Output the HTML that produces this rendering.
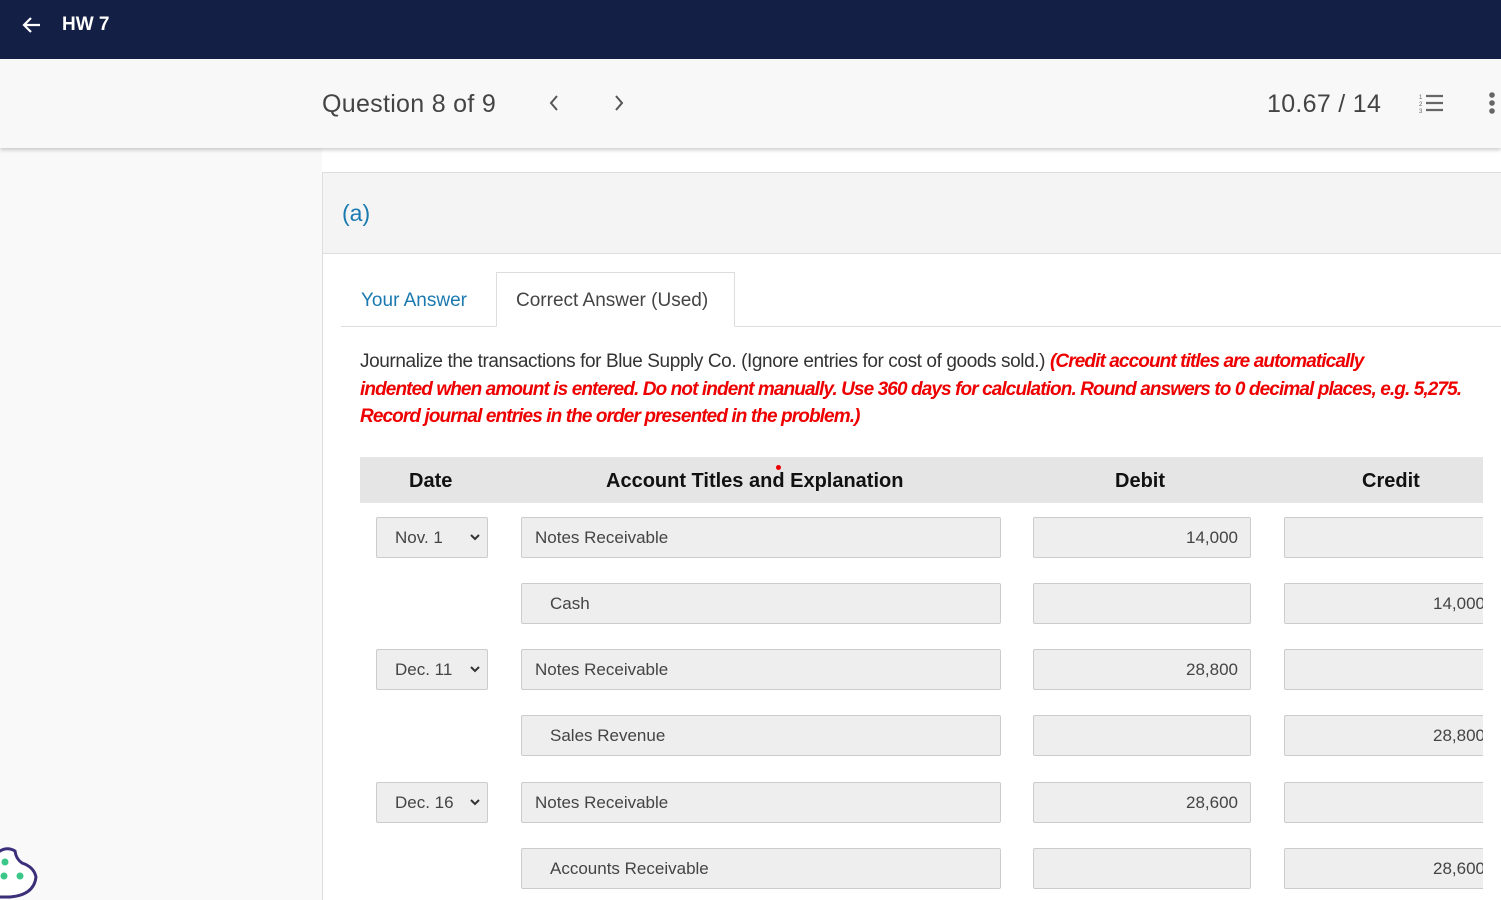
<!DOCTYPE html>
<html><head><style>
*{box-sizing:border-box;margin:0;padding:0}
html{width:1501px;height:900px;overflow:hidden}
body{width:1501px;height:900px;overflow:hidden;background:#fff;font-family:"Liberation Sans",sans-serif;position:relative;color:#333}
.nav{position:absolute;left:0;top:0;width:1501px;height:59px;background:#141f45;color:#fff}
.sub{position:absolute;left:0;top:59px;width:1501px;height:89px;background:#f8f8f8;box-shadow:0 2px 4px rgba(0,0,0,.2);z-index:2}
.left{position:absolute;left:0;top:148px;width:322px;height:752px;background:#f9f9f9}
.card{position:absolute;left:322px;top:172px;width:1190px;height:728px;border:1px solid #ddd;border-bottom:none;background:#fff}
.ch{height:81px;background:#f4f4f4;border-bottom:1px solid #ddd}
.a{position:absolute;top:0}
.f{position:absolute;background:#eee;border:1px solid #ccc;border-radius:2px;font-size:17px;color:#444;line-height:39px;height:41px}
</style></head><body>
<div class="nav">
<svg class="a" style="left:20px;top:13px" width="24" height="24" viewBox="0 0 24 24"><path d="M20 12H4M11 5l-7 7 7 7" stroke="#fff" stroke-width="2.2" fill="none"/></svg>
<div class="a" style="left:62px;top:14px;font-size:19px;font-weight:bold">HW 7</div>
</div>
<div class="sub">
<div class="a" style="left:322px;top:31px;font-size:25px;color:#444;letter-spacing:0.3px">Question 8 of 9</div>
<svg class="a" style="left:546px;top:34px" width="16" height="20"><path d="M11 3L5 10l6 7" stroke="#555" stroke-width="2" fill="none"/></svg>
<svg class="a" style="left:611px;top:34px" width="16" height="20"><path d="M5 3l6 7-6 7" stroke="#555" stroke-width="2" fill="none"/></svg>
<div class="a" style="left:1267px;top:31px;font-size:25px;color:#444;letter-spacing:0.3px">10.67 / 14</div>
<svg class="a" style="left:1418px;top:32px" width="28" height="24"><text x="1" y="8" font-size="6" fill="#666">1</text><text x="1" y="15" font-size="6" fill="#666">2</text><text x="1" y="22" font-size="6" fill="#666">3</text><path d="M8 5h17M8 12h17M8 19h17" stroke="#666" stroke-width="2.2"/></svg>
<svg class="a" style="left:1486px;top:32px" width="12" height="24"><circle cx="6" cy="4" r="2.8" fill="#666"/><circle cx="6" cy="12" r="2.8" fill="#666"/><circle cx="6" cy="20" r="2.8" fill="#666"/></svg>
</div>
<div class="left"></div>
<div class="card"><div class="ch"><div class="a" style="left:19px;top:27px;font-size:23px;color:#1a7ab0">(a)</div></div></div>
<div class="a" style="left:341px;top:326px;width:1160px;border-top:1px solid #ddd"></div>
<div class="a" style="left:496px;top:272px;width:239px;height:55px;border:1px solid #ddd;border-bottom:1px solid #fff;background:#fff"></div>
<div class="a" style="left:361px;top:290px;font-size:19px;color:#1a7ab0">Your Answer</div>
<div class="a" style="left:516px;top:290px;font-size:19px;color:#444">Correct Answer (Used)</div>
<div class="a" style="left:360px;top:348px;width:1140px;white-space:nowrap;font-size:19px;line-height:27.5px;color:#333;letter-spacing:-0.4px">Journalize the transactions for Blue Supply Co. (Ignore entries for cost of goods sold.) <i style="color:#e00;font-weight:bold;letter-spacing:-0.9px">(Credit account titles are automatically<br>indented when amount is entered. Do not indent manually. Use 360 days for calculation. Round answers to 0 decimal places, e.g. 5,275.<br>Record journal entries in the order presented in the problem.)</i></div>
<div class="a" style="left:360px;top:457px;width:1123px;height:46px;background:#e5e5e5;font-weight:bold;font-size:20px;color:#111;line-height:48px">
<span class="a" style="left:49px">Date</span><span class="a" style="left:246px">Account Titles and Explanation</span><span class="a" style="left:755px">Debit</span><span class="a" style="left:1002px">Credit</span>
<span class="a" style="left:416px;top:8px;width:5px;height:5px;border-radius:50%;background:#e00"></span></div>
<div id="rows"></div>
<script>
var r=[[517,"Nov. 1","Notes Receivable",0,"14,000",""],[583,"","Cash",1,"","14,000"],[649,"Dec. 11","Notes Receivable",0,"28,800",""],[715,"","Sales Revenue",1,"","28,800"],[782,"Dec. 16","Notes Receivable",0,"28,600",""],[848,"","Accounts Receivable",1,"","28,600"]];
var h="";r.forEach(function(x){var t=x[0];
if(x[1])h+='<div class="f" style="left:376px;top:'+t+'px;width:112px;padding-left:18px">'+x[1]+'<svg style="position:absolute;right:6px;top:15px" width="12" height="10"><path d="M2 2l4 4 4-4" stroke="#333" stroke-width="2" fill="none"/></svg></div>';
h+='<div class="f" style="left:521px;top:'+t+'px;width:480px;padding-left:'+(x[3]?28:13)+'px">'+x[2]+'</div>';
h+='<div class="f" style="left:1033px;top:'+t+'px;width:218px;text-align:right;padding-right:12px">'+x[4]+'</div>';
h+='<div class="f" style="left:1284px;top:'+t+'px;width:220px;text-align:right;padding-right:18px;overflow:hidden">'+x[5]+'</div>';});
document.getElementById('rows').innerHTML=h;
</script>
<div class="a" style="left:1483px;top:505px;width:18px;height:395px;background:#fff"></div>
<svg class="a" style="left:0;top:845px" width="40" height="55"><path d="M-5 10 Q5 0 15 6 Q16 14 22 18 Q34 22 36 32 Q34 50 10 52 L-5 52Z" fill="#fff" stroke="#3b2f7a" stroke-width="3"/><circle cx="5" cy="17" r="3.5" fill="#3cc88a"/><circle cx="4" cy="31" r="3.5" fill="#3cc88a"/><circle cx="20" cy="31" r="3.5" fill="#3cc88a"/></svg>
</body></html>
